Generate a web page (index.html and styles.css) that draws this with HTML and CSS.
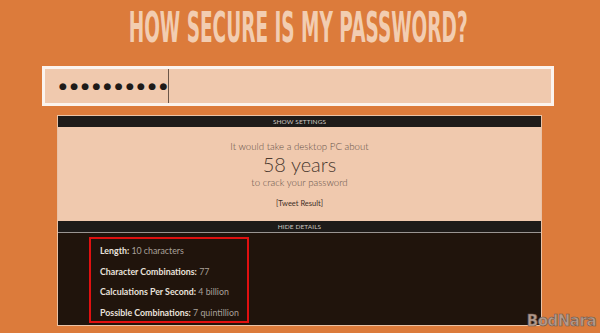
FILE: index.html
```html
<!DOCTYPE html>
<html lang="en">

<head>
    <meta charset="UTF-8">
    <meta name="viewport" content="width=device-width, initial-scale=1.0">
    <title>How Secure Is My Password?</title>
    <link rel="stylesheet" href="styles.css">
</head>

<body>
    <header class="title-wrap">
        <h1 class="title">HOW SECURE IS MY PASSWORD?</h1>
    </header>
    <div class="password-box">
        <span class="dots">●●●●●●●●●●</span><span class="caret"></span>
    </div>
    <div class="panel">
        <div class="bar">Show Settings</div>
        <div class="result">
            <p class="line">It would take a desktop PC about</p>
            <p class="time">58 years</p>
            <p class="line">to crack your password</p>
            <p class="tweet">[Tweet Result]</p>
        </div>
        <div class="bar bar-details">Hide Details</div>
        <div class="details">
            <ul class="detail-list">
                <li><b>Length:</b> 10 characters</li>
                <li><b>Character Combinations:</b> 77</li>
                <li><b>Calculations Per Second:</b> 4 billion</li>
                <li><b>Possible Combinations:</b> 7 quintillion</li>
            </ul>
        </div>
    </div>
    <div class="watermark">BodNara</div>
</body>

</html>
```
FILE: styles.css
```css
body {
    margin: 0;
    background-color: #dc7b3b;
    font-family: Lato, "Open Sans", sans-serif;
    height: 333px;
    overflow: hidden;
    position: relative;
}

.title-wrap {
    height: 66px;
    display: flex;
    justify-content: center;
    overflow: hidden;
}

.title {
    flex: none;
    margin: 0 0 0 -4px;
    padding-top: 7px;
    font-family: "DejaVu Sans", sans-serif;
    font-weight: bold;
    font-size: 42px;
    line-height: 42px;
    color: #f2cdb1;
    white-space: nowrap;
    transform: scaleX(0.44);
}

.password-box {
    margin: 0 46px 0 42px;
    height: 34px;
    border: 3px solid #fbf3ee;
    background-color: #f0c9ae;
    display: flex;
    align-items: center;
    padding-left: 14px;
}

.dots {
    font-family: "DejaVu Sans", sans-serif;
    font-size: 9px;
    letter-spacing: 3.3px;
    color: #1e1a18;
}

.caret {
    width: 1px;
    height: 34px;
    background-color: #6b5648;
    margin-left: -3px;
}

.panel {
    width: 483px;
    margin: 9px 0 0 57px;
    border: 1px solid #e9c2a6;
}

.bar {
    background-color: #1e1b19;
    color: #cfc8c2;
    font-size: 6.5px;
    text-transform: uppercase;
    text-align: center;
    height: 11px;
    line-height: 11px;
    letter-spacing: 0.1px;
}

.result {
    background-color: #f0c9ae;
    text-align: center;
    color: #65524a;
    padding-top: 12px;
    height: 82px;
}

.result p {
    margin: 0;
}

.line {
    font-size: 9.7px;
    font-weight: 300;
    line-height: 14px;
}

.time {
    font-size: 20px;
    font-weight: 300;
    line-height: 22px;
    color: #4b392e;
}

.result .tweet {
    font-size: 7.5px;
    line-height: 9px;
    color: #3e2f26;
    margin-top: 10px;
}

.bar-details {
    border-bottom: 1px solid #9a9592;
}

.details {
    background-color: #20140c;
    height: 88px;
    padding: 4px 0 0 31px;
}

.detail-list {
    list-style: none;
    margin: 0;
    padding: 2px 0 0 9px;
    width: 147px;
    border: 2px solid #e01010;
    height: 80px;
}

.detail-list li {
    font-size: 8.8px;
    line-height: 20.7px;
    color: #a9a19a;
    white-space: nowrap;
}

.detail-list b {
    color: #e9e2dc;
}

.watermark {
    position: absolute;
    right: 4px;
    bottom: 3px;
    font-family: "DejaVu Sans", sans-serif;
    font-weight: bold;
    font-size: 15px;
    color: #b39a8c;
    -webkit-text-stroke: 0.6px #6f5a50;
    letter-spacing: -0.5px;
}
```
